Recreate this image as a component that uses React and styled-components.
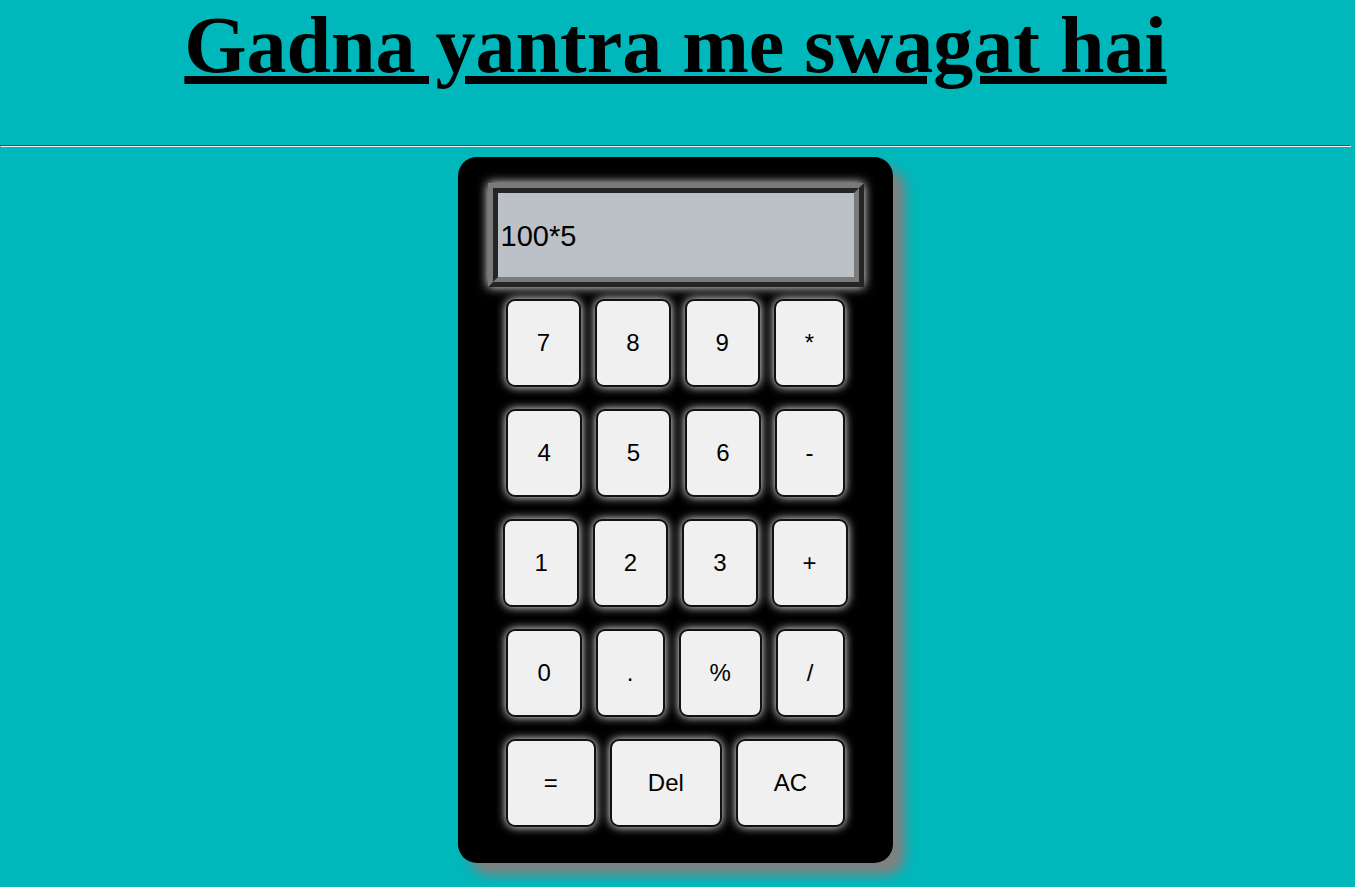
import React from "react";
import styled, { createGlobalStyle } from "styled-components";

const Global = createGlobalStyle`
  html, body { margin: 0; padding: 0; }
  body {
    background: #00b7bb;
    font-family: "Liberation Serif", "Times New Roman", serif;
  }
`;

const Page = styled.div`
  padding: 0 4px 20px 0;
`;

const Title = styled.h1`
  margin: 0 0 0.67em;
  font-family: "Liberation Serif", "Times New Roman", serif;
  font-size: 80px;
  font-weight: bold;
  text-align: center;
  text-decoration: underline;
  color: #000;
`;

const Rule = styled.hr`
  margin: 0 0 10px;
  border: 1px inset #eee;
  border-top-color: #9a9a9a;
  border-left-color: #9a9a9a;
  height: 0;
`;

const Body = styled.div`
  width: 435px;
  height: 706px;
  margin: 0 auto;
  box-sizing: border-box;
  background: #000;
  border-radius: 19px;
  box-shadow: 12px 12px 12px #808080;
  padding-top: 26px;
  display: flex;
  flex-direction: column;
  align-items: center;
`;

const Screen = styled.div`
  width: 376px;
  height: 104px;
  box-sizing: border-box;
  border: 10px ridge #7a7a7a;
  background: #bcc0c7;
  box-shadow: 0 0 10px #fff;
  display: flex;
  align-items: center;
  padding: 4px 0 0 3px;
  font-family: "Liberation Sans", Arial, sans-serif;
  font-size: 29px;
  color: #000;
  margin-bottom: 12px;
`;

const Keys = styled.div`
  display: flex;
  flex-direction: column;
  gap: 22px;
  width: 100%;
`;

const Row = styled.div`
  display: flex;
  justify-content: center;
  gap: 14px;
`;

const Key = styled.button`
  font-family: "Liberation Sans", Arial, sans-serif;
  font-size: 24px;
  line-height: normal;
  color: #000;
  background: #f0f0f0;
  border: 2px solid #111;
  border-radius: 9px;
  padding: ${(p) => (p.$wide ? "28px 36px" : "28px 29px")};
  box-shadow: 0 0 10px #fff;
  cursor: pointer;
`;

const rows = [
  ["7", "8", "9", "*"],
  ["4", "5", "6", "-"],
  ["1", "2", "3", "+"],
  ["0", ".", "%", "/"],
];

export default function App() {
  return (
    <Page>
      <Global />
      <Title>Gadna yantra me swagat hai</Title>
      <Rule />
      <Body>
        <Screen>100*5</Screen>
        <Keys>
          {rows.map((r, i) => (
            <Row key={i}>
              {r.map((k) => (
                <Key key={k}>{k}</Key>
              ))}
            </Row>
          ))}
          <Row>
            <Key $wide>=</Key>
            <Key $wide>Del</Key>
            <Key $wide>AC</Key>
          </Row>
        </Keys>
      </Body>
    </Page>
  );
}
